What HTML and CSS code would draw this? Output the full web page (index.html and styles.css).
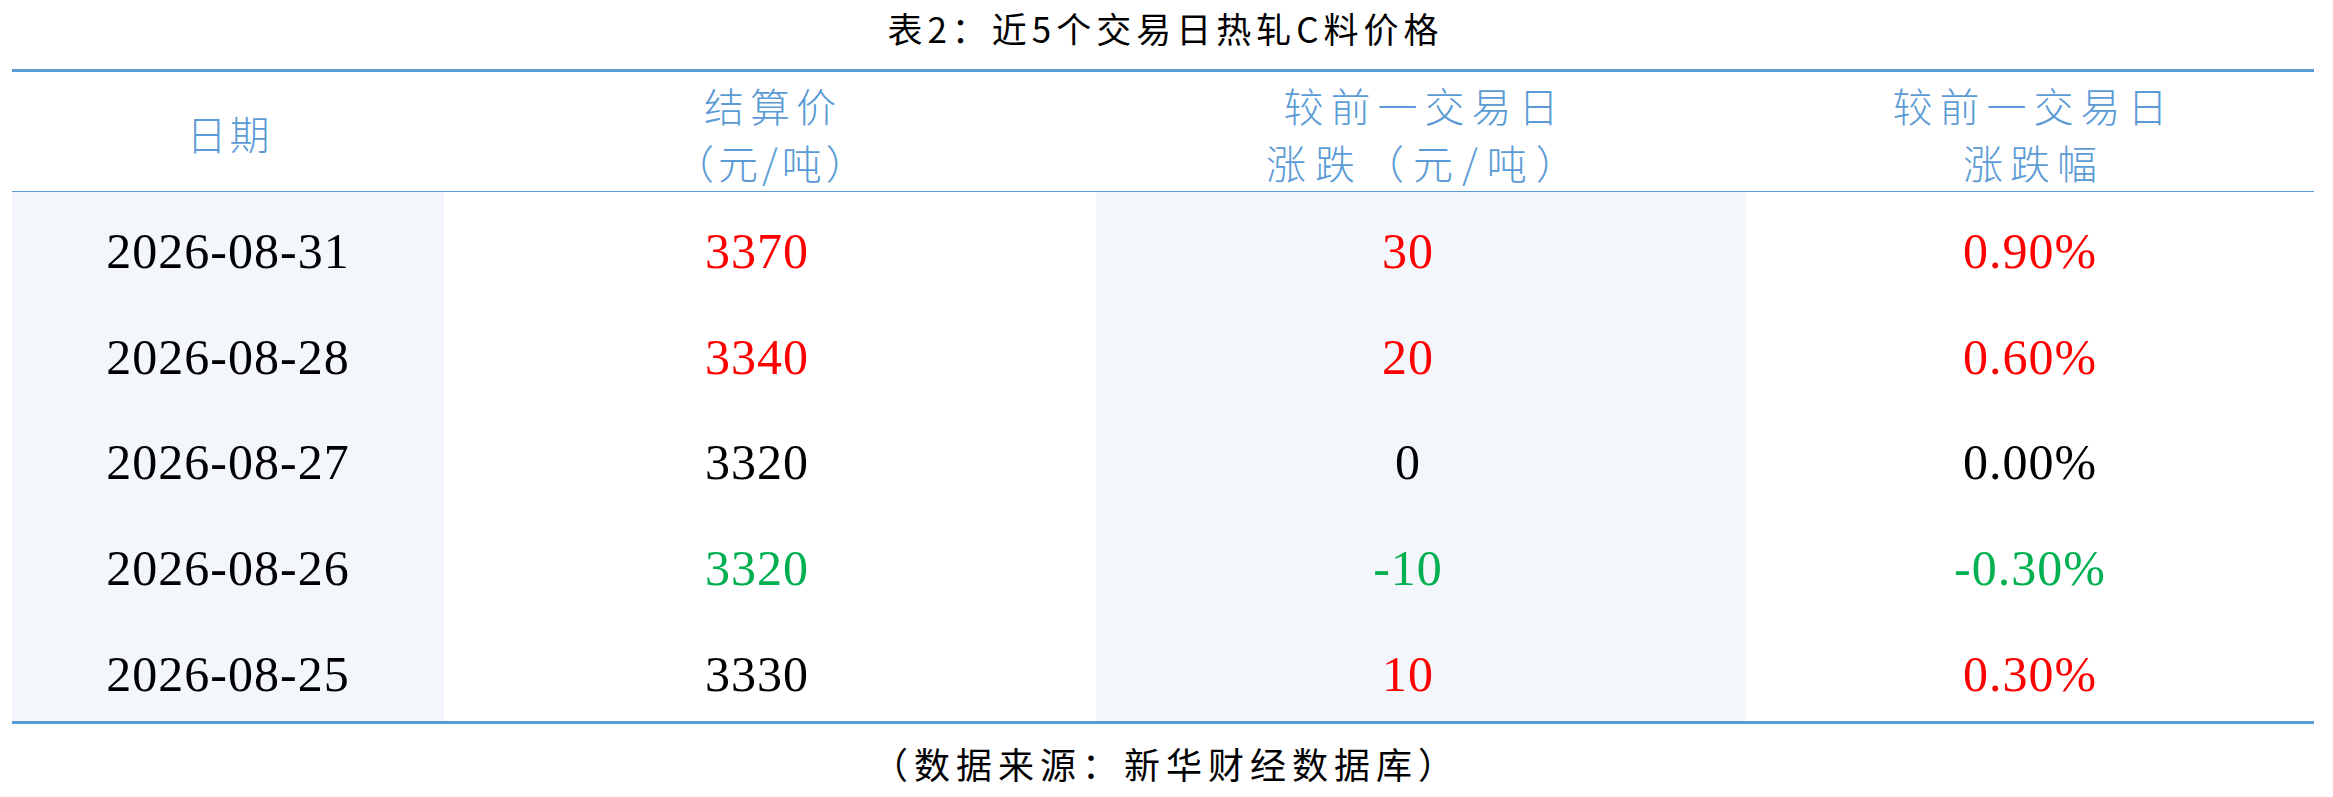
FILE: index.html
```html
<!DOCTYPE html>
<html lang="zh-CN">
<head>
<meta charset="utf-8">
<title>表2：近5个交易日热轧C料价格</title>
<link rel="stylesheet" href="styles.css">
</head>
<body>
<div class="page">
  <div class="title">表2：近5个交易日热轧C料价格</div>
  <div class="table">
    <div class="thead">
      <div class="th"><span class="ls-s">日期</span></div>
      <div class="th"><span class="ls-m">结算价</span><span class="ls-4">（元/吨）</span></div>
      <div class="th"><span>较前一交易日</span><span class="ls-9">涨跌（元/吨）</span></div>
      <div class="th"><span>较前一交易日</span><span>涨跌幅</span></div>
    </div>
    <div class="tbody">
      <div class="td shade">2026-08-31</div>
      <div class="td mid up">3370</div>
      <div class="td mid shade up">30</div>
      <div class="td up">0.90%</div>

      <div class="td shade">2026-08-28</div>
      <div class="td mid up">3340</div>
      <div class="td mid shade up">20</div>
      <div class="td up">0.60%</div>

      <div class="td shade">2026-08-27</div>
      <div class="td mid">3320</div>
      <div class="td mid shade">0</div>
      <div class="td">0.00%</div>

      <div class="td shade">2026-08-26</div>
      <div class="td mid down">3320</div>
      <div class="td mid shade down">-10</div>
      <div class="td down">-0.30%</div>

      <div class="td shade">2026-08-25</div>
      <div class="td mid">3330</div>
      <div class="td mid shade up">10</div>
      <div class="td up">0.30%</div>
    </div>
  </div>
  <div class="source">（数据来源：新华财经数据库）</div>
</div>
</body>
</html>
```

FILE: styles.css
```css
html, body {
  margin: 0;
  padding: 0;
  background: #ffffff;
}

.page {
  width: 2302px;
  margin-left: 12px;
  font-family: "Noto Sans CJK SC", "Liberation Serif", serif;
  color: #000000;
}

.title {
  height: 56px;
  line-height: 56px;
  margin-bottom: 13px;
  text-align: center;
  font-size: 35px;
  font-weight: 400;
  letter-spacing: 5px;
  padding-left: 5px;
}

.table {
  border-top: 3px solid #5b9bd5;
  border-bottom: 3px solid #5b9bd5;
}

.thead,
.tbody {
  display: grid;
  grid-template-columns: 432px 652px 650px 568px;
}

.thead {
  height: 119px;
  border-bottom: 1px solid #5b9bd5;
}

.th {
  display: flex;
  flex-direction: column;
  align-items: center;
  justify-content: center;
  padding-top: 4px;
  box-sizing: border-box;
  color: #5b9bd5;
  font-size: 40px;
  line-height: 57px;
  font-weight: 300;
}

.th span {
  letter-spacing: 7px;
  padding-left: 7px;
}

.th span.ls-s {
  letter-spacing: 3px;
  padding-left: 3px;
}

.th span.ls-m {
  letter-spacing: 6px;
  padding-left: 6px;
}

.th span.ls-4 {
  letter-spacing: 4px;
  padding-left: 4px;
}

.th span.ls-9 {
  letter-spacing: 9px;
  padding-left: 9px;
}

.tbody {
  grid-template-rows: repeat(5, 1fr);
  height: 529px;
}

.td {
  display: flex;
  align-items: center;
  justify-content: center;
  padding-top: 12px;
  box-sizing: border-box;
  font-family: "Liberation Serif", serif;
  font-size: 50px;
  letter-spacing: 1px;
  color: #000000;
}

.mid {
  padding-right: 26px;
}

.shade {
  background: #f3f6fb;
}

.up {
  color: #ff0000;
}

.down {
  color: #00b050;
}

.source {
  padding-top: 20px;
  line-height: 38px;
  text-align: center;
  font-size: 36px;
  font-weight: 400;
  letter-spacing: 6px;
  padding-left: 6px;
}
```
